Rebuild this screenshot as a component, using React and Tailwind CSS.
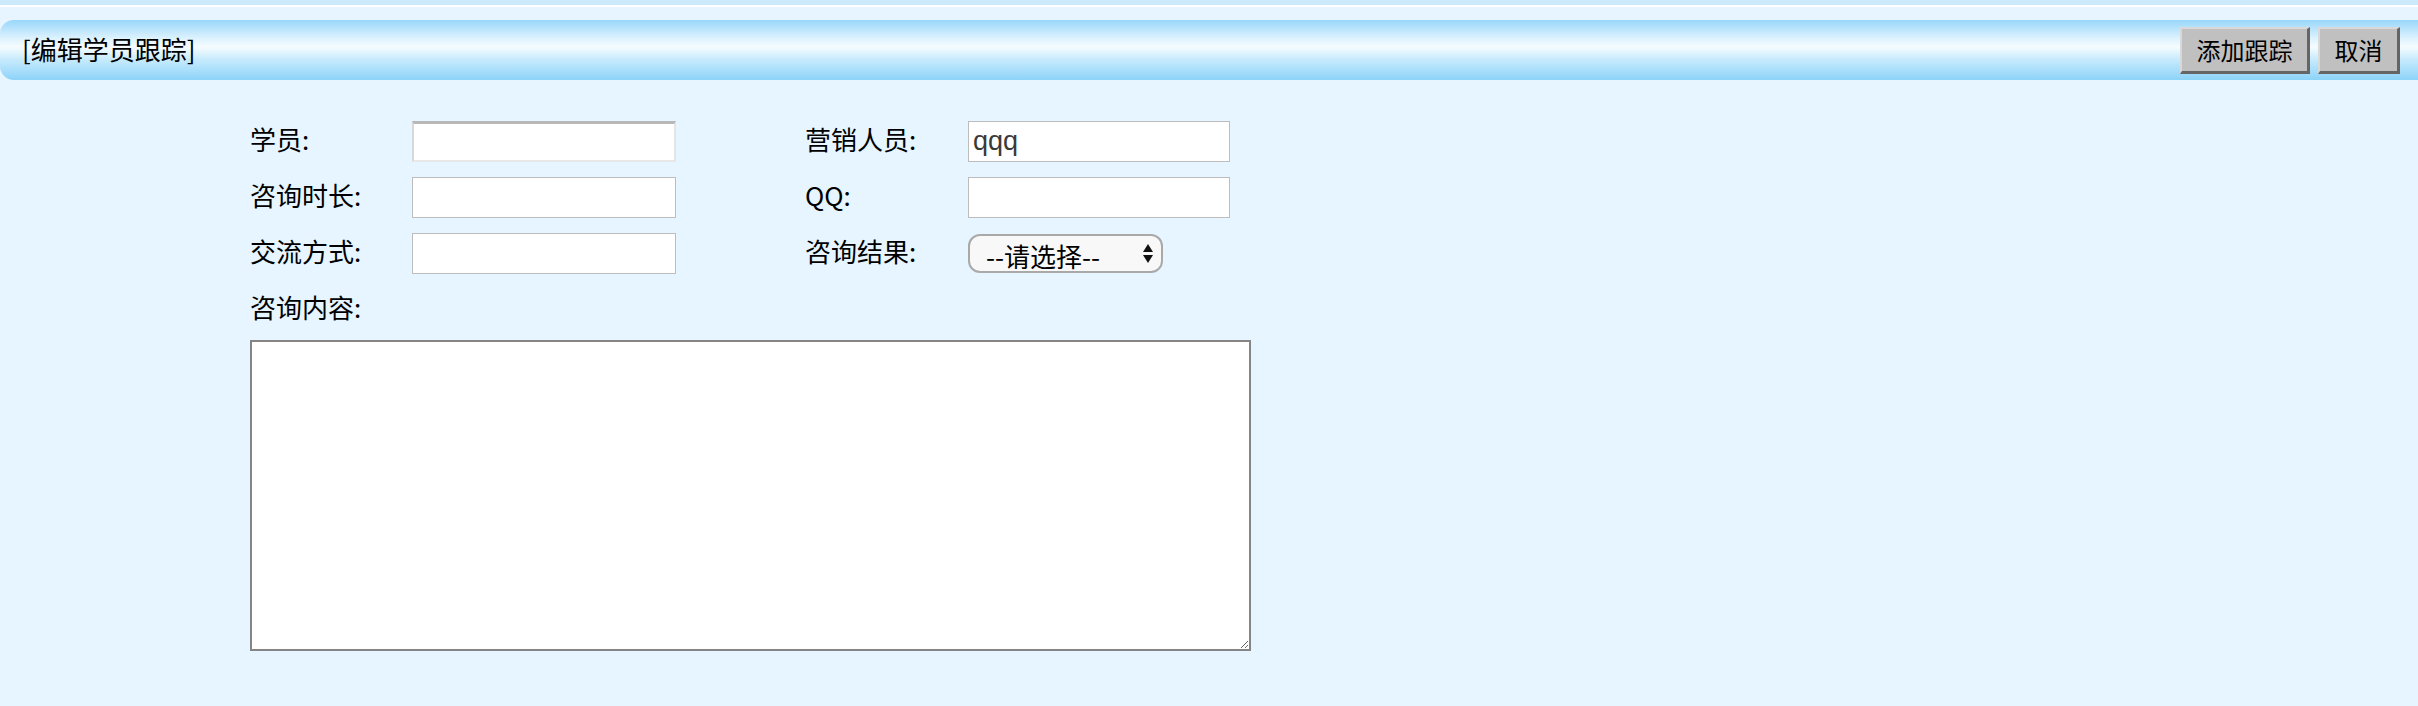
import React from 'react';

const font = { fontFamily: '"Noto Sans CJK SC", "Noto Sans", sans-serif' };

const Field = ({ label, children, labelWidth = 'w-[162px]' }) => (
  <div className="flex items-center">
    <span className={`${labelWidth} text-[26px] leading-none pb-[5px] text-black`}>{label}</span>
    {children}
  </div>
);

const TextInput = ({ value = '', inset = false, w = 'w-[264px]' }) => (
  <input
    type="text"
    defaultValue={value}
    className={`${w} h-[41px] bg-white px-[4px] text-[27px] text-[#3a3a3a] font-['Liberation_Sans',sans-serif] outline-none ${
      inset
        ? 'border-t-[3px] border-l-[2px] border-r-[2px] border-b-[2px] border-t-[#b8b8b8] border-l-[#d8d8d8] border-r-[#e4e4e4] border-b-[#e8e8e8]'
        : 'border border-[#bdbdbd]'
    }`}
  />
);

const HeaderButton = ({ children, w }) => (
  <button
    className={`${w} h-[47px] bg-[#c0c0c0] text-[24px] text-black border-t-[2px] border-l-[2px] border-r-[3px] border-b-[3px] border-t-[#d9d9d9] border-l-[#d9d9d9] border-r-[#656565] border-b-[#656565] flex items-center justify-center`}
  >
    {children}
  </button>
);

export default function App() {
  return (
    <div className="min-h-screen bg-[#e6f5ff]" style={font}>
      <div className="h-[5px] bg-[#cde9fc]" />
      <div className="h-[2px] bg-white" />

      {/* header bar */}
      <div className="mt-[13px] h-[60px] rounded-l-[14px] bg-[linear-gradient(to_bottom,#98d7fa_0%,#dcf2fe_30%,#f6fcff_45%,#c8ebfd_65%,#8dd3f9_100%)] flex items-center justify-between pl-[22px] pr-[18px]">
        <span className="text-[26px] leading-none pb-[3px] text-black">[编辑学员跟踪]</span>
        <div className="flex gap-[8px]">
          <HeaderButton w="w-[130px]">添加跟踪</HeaderButton>
          <HeaderButton w="w-[82px]">取消</HeaderButton>
        </div>
      </div>

      {/* form */}
      <div className="pl-[250px] pt-[33px]">
        <div className="h-[56px] flex items-center">
          <Field label="学员:">
            <TextInput inset />
          </Field>
          <div className="ml-[129px]">
            <Field label="营销人员:" labelWidth="w-[163px]">
              <TextInput value="qqq" w="w-[262px]" />
            </Field>
          </div>
        </div>
        <div className="h-[56px] flex items-center">
          <Field label="咨询时长:">
            <TextInput />
          </Field>
          <div className="ml-[129px]">
            <Field label="QQ:" labelWidth="w-[163px]">
              <TextInput w="w-[262px]" />
            </Field>
          </div>
        </div>
        <div className="h-[56px] flex items-center">
          <Field label="交流方式:">
            <TextInput />
          </Field>
          <div className="ml-[129px]">
            <Field label="咨询结果:" labelWidth="w-[163px]">
              <div className="relative w-[195px] h-[39px]">
                <select className="appearance-none w-full h-full rounded-[12px] border-[2px] border-[#a9a9a9] bg-[#f8f8f8] pl-[16px] text-[26px] text-black outline-none">
                  <option>--请选择--</option>
                </select>
                <svg className="absolute right-[10px] top-[10px] pointer-events-none" width="10" height="19" viewBox="0 0 10 19">
                  <path d="M5 0 L10 8 L0 8 Z" fill="#111" />
                  <path d="M0 11 L10 11 L5 19 Z" fill="#111" />
                </svg>
              </div>
            </Field>
          </div>
        </div>
        <div className="h-[56px] flex items-center">
          <span className="text-[26px] leading-none pb-[5px] text-black">咨询内容:</span>
        </div>
        <textarea className="mt-[3px] block w-[1001px] h-[311px] bg-white border-[2px] border-[#858585] outline-none" />
      </div>
    </div>
  );
}
